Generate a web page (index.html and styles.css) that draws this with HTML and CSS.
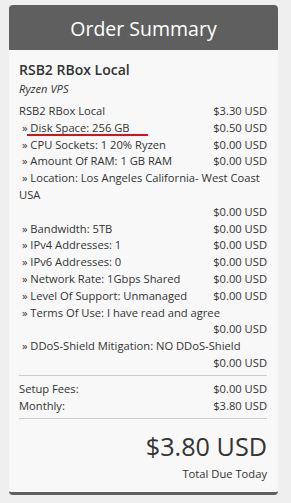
FILE: index.html
```html
<!DOCTYPE html>
<html>
<head>
<meta charset="utf-8">
<link rel="stylesheet" href="styles.css">
</head>
<body>
<div class="summary">
  <div class="summary-header"><h2 class="summary-title">Order Summary</h2></div>
  <div class="summary-body">
    <div class="product-name">RSB2 RBox Local</div>
    <div class="product-group">Ryzen VPS</div>
    <div class="items">
      <div class="item"><span class="label">RSB2 RBox Local</span><span class="price">$3.30 USD</span></div>
      <div class="item marked"><span class="label">&nbsp;» Disk Space: 256 GB</span><span class="price">$0.50 USD</span><span class="mark"></span></div>
      <div class="item"><span class="label">&nbsp;» CPU Sockets: 1 20% Ryzen</span><span class="price">$0.00 USD</span></div>
      <div class="item"><span class="label">&nbsp;» Amount Of RAM: 1 GB RAM</span><span class="price">$0.00 USD</span></div>
      <div class="item"><span class="label">&nbsp;» Location: Los Angeles California- West Coast USA</span><span class="price">$0.00 USD</span></div>
      <div class="item"><span class="label">&nbsp;» Bandwidth: 5TB</span><span class="price">$0.00 USD</span></div>
      <div class="item"><span class="label">&nbsp;» IPv4 Addresses: 1</span><span class="price">$0.00 USD</span></div>
      <div class="item"><span class="label">&nbsp;» IPv6 Addresses: 0</span><span class="price">$0.00 USD</span></div>
      <div class="item"><span class="label">&nbsp;» Network Rate: 1Gbps Shared</span><span class="price">$0.00 USD</span></div>
      <div class="item"><span class="label">&nbsp;» Level Of Support: Unmanaged</span><span class="price">$0.00 USD</span></div>
      <div class="item"><span class="label">&nbsp;» Terms Of Use: I have read and agree</span><span class="price">$0.00 USD</span></div>
      <div class="item"><span class="label">&nbsp;» DDoS-Shield Mitigation: NO DDoS-Shield</span><span class="price">$0.00 USD</span></div>
    </div>
    <div class="totals">
      <div class="item"><span class="label">Setup Fees:</span><span class="price">$0.00 USD</span></div>
      <div class="item"><span class="label">Monthly:</span><span class="price">$3.80 USD</span></div>
    </div>
    <div class="total-due">
      <div class="amount">$3.80 USD</div>
      <div class="due-label">Total Due Today</div>
    </div>
  </div>
</div>
</body>
</html>
```
FILE: styles.css
```css
html, body {
  margin: 0;
  padding: 0;
  background: #efefef;
}
body {
  font-family: "Open Sans", "DejaVu Sans", sans-serif;
  color: #333;
  padding: 5px 13px 0 9px;
}
.summary {
  background: #f8f8f8;
  border-radius: 4px;
  border-bottom: 3px solid #5f5f5f;
  overflow: hidden;
}
.summary-header {
  background: #5f5f5f;
  height: 45px;
  display: flex;
  align-items: center;
  justify-content: center;
}
.summary-title {
  margin: 0;
  color: #fff;
  font-weight: 400;
  font-size: 19.5px;
  line-height: 1;
  padding-top: 2px;
}
.summary-body {
  padding: 10px 11px 10px 10px;
}
.product-name {
  font-size: 14px;
  font-weight: 600;
  line-height: 20px;
}
.product-group {
  font-size: 11.2px;
  font-style: italic;
  line-height: 17px;
  margin-bottom: 6px;
}
.items {
  padding-bottom: 3px;
  border-bottom: 1px solid #ccc;
}
.item {
  display: flex;
  flex-wrap: wrap;
  font-size: 11.2px;
  line-height: 16.8px;
  position: relative;
}
.price {
  margin-left: auto;
}
.mark {
  position: absolute;
  left: 8px;
  top: 14px;
  width: 121px;
  height: 2px;
  background: #d3151a;
}
.totals {
  padding: 5px 0 4px;
  border-bottom: 1px solid #ccc;
}
.total-due {
  text-align: right;
  padding-top: 10px;
}
.amount {
  font-size: 25.2px;
  line-height: 34px;
}
.due-label {
  font-size: 11.2px;
  line-height: 17px;
  margin-top: 2px;
}
```
